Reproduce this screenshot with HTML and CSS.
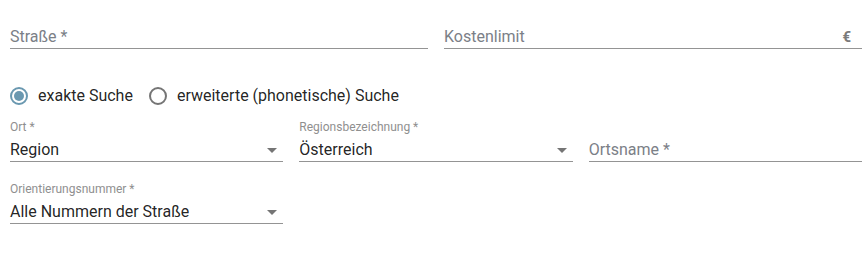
FILE: index.html
```html
<!DOCTYPE html>
<html lang="de">
<head>
<meta charset="utf-8">
<title>Suche</title>
<link rel="stylesheet" href="styles.css">
</head>
<body>
<div class="form">
  <div class="row cols-2">
    <div class="field">
      <div class="label"></div>
      <div class="control"><span class="placeholder">Straße *</span></div>
    </div>
    <div class="field">
      <div class="label"></div>
      <div class="control"><span class="placeholder">Kostenlimit</span><span class="suffix">€</span></div>
    </div>
  </div>

  <div class="radios">
    <label class="radio checked"><span class="ring"><span class="dot"></span></span><span class="rtext">exakte Suche</span></label>
    <label class="radio"><span class="ring"></span><span class="rtext">erweiterte (phonetische) Suche</span></label>
  </div>

  <div class="row cols-3">
    <div class="field">
      <div class="label">Ort *</div>
      <div class="control"><span class="value">Region</span><span class="arrow"></span></div>
    </div>
    <div class="field">
      <div class="label">Regionsbezeichnung *</div>
      <div class="control"><span class="value">Österreich</span><span class="arrow"></span></div>
    </div>
    <div class="field">
      <div class="label"></div>
      <div class="control"><span class="placeholder">Ortsname *</span></div>
    </div>
  </div>

  <div class="row cols-3 last">
    <div class="field">
      <div class="label">Orientierungsnummer *</div>
      <div class="control"><span class="value">Alle Nummern der Straße</span><span class="arrow"></span></div>
    </div>
  </div>
</div>
</body>
</html>
```

FILE: styles.css
```css
html, body {
  margin: 0;
  padding: 0;
  background: #ffffff;
  font-family: Roboto, "Liberation Sans", Arial, sans-serif;
}

.form {
  width: 852px;
  padding: 7px 0 0 10px;
}

.row {
  display: grid;
  column-gap: 16px;
}

.cols-2 {
  grid-template-columns: 1fr 1fr;
}

.cols-3 {
  grid-template-columns: 1fr 1fr 1fr;
  margin-top: 14px;
}

.cols-3.last {
  margin-top: 20px;
}

.field {
  display: flex;
  flex-direction: column;
}

.label {
  font-size: 12px;
  line-height: 14px;
  height: 14px;
  margin-bottom: 6px;
  color: #8f8f8f;
  white-space: nowrap;
}

.control {
  display: flex;
  align-items: center;
  height: 20px;
  padding-bottom: 1px;
  border-bottom: 1px solid #949494;
  font-size: 16px;
  line-height: 20px;
}

.placeholder {
  flex: 1;
  color: #7b8087;
}

.value {
  flex: 1;
  color: rgba(0, 0, 0, 0.87);
  white-space: nowrap;
}

.suffix {
  font-size: 15px;
  font-weight: 700;
  color: #7a7a7a;
  margin-right: 11px;
}

.arrow {
  width: 0;
  height: 0;
  border-left: 5px solid transparent;
  border-right: 5px solid transparent;
  border-top: 5px solid #757575;
  margin-right: 6px;
}

.radios {
  display: flex;
  align-items: center;
  gap: 16px;
  height: 20px;
  margin-top: 37px;
}

.radio {
  display: flex;
  align-items: center;
  font-size: 16px;
  line-height: 20px;
  color: rgba(0, 0, 0, 0.87);
}

.ring {
  box-sizing: border-box;
  width: 18px;
  height: 18px;
  border: 2px solid #757575;
  border-radius: 50%;
  display: flex;
  align-items: center;
  justify-content: center;
  margin-right: 10px;
}

.radio.checked .ring {
  border-color: #6a98b0;
}

.dot {
  width: 10px;
  height: 10px;
  border-radius: 50%;
  background: #6a98b0;
}
```
